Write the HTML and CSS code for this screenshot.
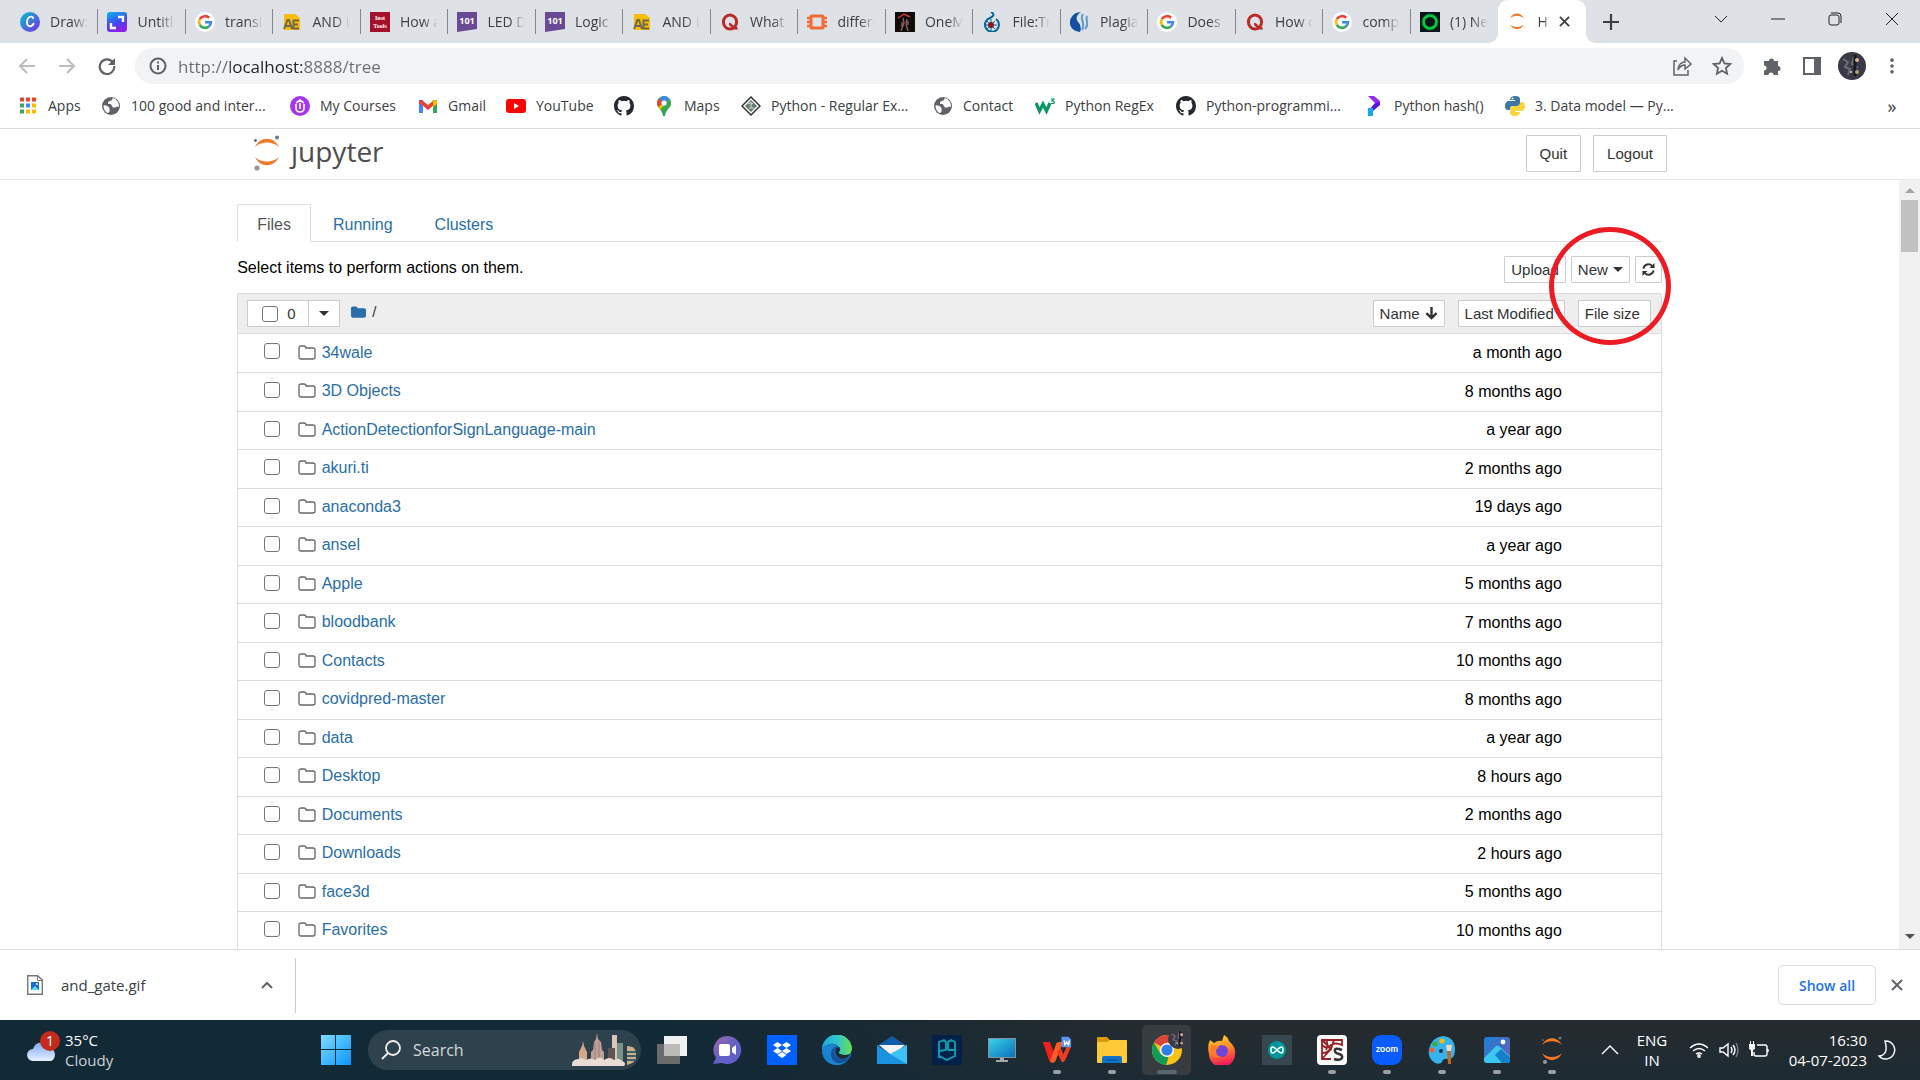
FILE: index.html
```html
<!DOCTYPE html>
<html lang="en">
	<head>
		<meta charset="utf-8">
		<title>Home Page - Select or create a notebook</title>
		<link rel="stylesheet" href="styles.css">
	</head>
	<body>
		<!-- shared icons -->
		<svg class="defs" aria-hidden="true">
			<symbol id="google" viewBox="0 0 20 20"><circle cx="10" cy="10" r="10" fill="#fff"/><path d="M14.2 5.8A6 6 0 0 0 4.8 7.2" fill="none" stroke="#ea4335" stroke-width="2.6"/><path d="M4.8 7.2A6 6 0 0 0 4.8 12.8" fill="none" stroke="#fbbc05" stroke-width="2.6"/><path d="M4.8 12.8A6 6 0 0 0 13.8 14.6" fill="none" stroke="#34a853" stroke-width="2.6"/><path d="M13.8 14.6A6 6 0 0 0 16 10.2H10" fill="none" stroke="#4285f4" stroke-width="2.6"/></symbol>
			<symbol id="quora" viewBox="0 0 20 20"><ellipse cx="10" cy="10" rx="6.6" ry="7" fill="none" stroke="#b92b27" stroke-width="3"/><path d="M9 12c3 0 4 6 8.500 4" fill="none" stroke="#b92b27" stroke-width="2.600"/></symbol>
			<symbol id="ae" viewBox="0 0 20 20"><path d="M2 2h11l5 4v12H2z" fill="#fbbc05"/><path d="M2 17l3.500-9h1.500l3 9M3.500 14h5M17 8.500h-5.500v8H17M11.500 12.500H16" fill="none" stroke="#6d6a50" stroke-width="2"/></symbol>
			<symbol id="github" viewBox="0 0 16 16"><path fill="#24292f" d="M8 0C3.580 0 0 3.580 0 8c0 3.540 2.290 6.530 5.470 7.590.4.070.55-.17.55-.38 0-.19-.01-.82-.01-1.490-2.010.37-2.530-.49-2.690-.94-.09-.23-.48-.94-.82-1.130-.28-.15-.68-.52-.01-.53.63-.01 1.080.58 1.230.82.72 1.210 1.870.87 2.330.66.070-.52.28-.87.51-1.070-1.780-.2-3.640-.89-3.640-3.950 0-.87.31-1.590.82-2.150-.08-.2-.36-1.020.08-2.120 0 0 .67-.21 2.200.82a7.500 7.500 0 0 1 4 0c1.530-1.040 2.200-.82 2.200-.82.44 1.100.16 1.920.08 2.120.51.56.82 1.270.82 2.150 0 3.070-1.870 3.750-3.650 3.950.29.25.54.73.54 1.480 0 1.070-.01 1.930-.01 2.200 0 .21.15.46.55.38A8 8 0 0 0 16 8c0-4.420-3.580-8-8-8z"/></symbol>
			<symbol id="globe" viewBox="0 0 20 20"><circle cx="10" cy="10" r="9" fill="#5f6368"/><path d="M2.500 9l4 1 2 2v4l-2 1q-4-2-4-8zM12 2q-1 3-3 3t-2 3q3-1 4 2t4 1q2-1 3 0 0-7-6-9z" fill="#fff"/></symbol>
			<symbol id="folder" viewBox="0 0 18 16"><path d="M1 3q0-2 2-2h3q2 0 2 2h7q2 0 2 2v7q0 2-2 2H3q-2 0-2-2z" fill="none" stroke="#666" stroke-width="1.300"/></symbol>
			<symbol id="chip101" viewBox="0 0 20 20"><path d="M0 0h20v17L0 20z" fill="#6a4a95"/><text x="10" y="12" text-anchor="middle" font-size="9" font-weight="700" font-family="Open Sans" fill="#fff">101</text></symbol>
			<symbol id="jupiter" viewBox="0 0 26 34"><path d="M1 11C6 0 20 0 25 11 19 5 7 5 1 11zM1 21c5 11 19 11 24 0-6 6-18 6-24 0z" fill="#f37726"/></symbol>
			<symbol id="avatar" viewBox="0 0 28 28"><circle cx="14" cy="14" r="14" fill="#393a45"/><path d="M5 7l5 3-3 5 5 2-2 6M16 4l-2 8 5 3-3 8" stroke="#6c6e7a" stroke-width="2" fill="none"/><path d="M17 3v21" stroke="#171820" stroke-width="3"/><circle cx="19" cy="8" r="2" fill="#d6b893"/><circle cx="19" cy="20" r="2" fill="#b99a76"/><circle cx="13" cy="20" r="1" fill="#ddd"/></symbol>
		</svg>

		<header class="browser">
			<div class="tabstrip">
				<nav class="tabs" aria-label="Browser tabs">
					<a class="tab" href="#"><svg viewBox="0 0 20 20"><defs><linearGradient id="canva" x2="1" y2="1"><stop stop-color="#00c4cc"/><stop offset="1" stop-color="#7d2ae8"/></linearGradient></defs><circle cx="10" cy="10" r="10" fill="url(#canva)"/><path d="M13 7c1-4-6-3-6 3 0 6 5 5 7 1" fill="none" stroke="#fff" stroke-width="1.800"/></svg><span>Draw:</span></a>
					<a class="tab" href="#"><svg viewBox="0 0 20 20"><defs><linearGradient id="unt" x2=".4" y2="1"><stop stop-color="#0cb5f0"/><stop offset=".6" stop-color="#3b4df0"/><stop offset="1" stop-color="#8b22e8"/></linearGradient></defs><rect width="20" height="20" rx="3" fill="url(#unt)"/><path d="M11 5h5v5M4 11v5h5" fill="none" stroke="#fff" stroke-width="2.400"/></svg><span>Untitled</span></a>
					<a class="tab" href="#"><svg><use href="#google"/></svg><span>transistor</span></a>
					<a class="tab" href="#"><svg><use href="#ae"/></svg><span>AND Logic</span></a>
					<a class="tab" href="#"><svg viewBox="0 0 20 20"><rect width="20" height="20" fill="#a4102c"/><text x="10" y="8" text-anchor="middle" font-size="6" font-weight="700" font-family="Liberation Serif" fill="#fff">Inst</text><text x="10" y="16" text-anchor="middle" font-size="6" font-weight="700" font-family="Liberation Serif" fill="#fff">Tools</text></svg><span>How a</span></a>
					<a class="tab" href="#"><svg><use href="#chip101"/></svg><span>LED Driver</span></a>
					<a class="tab" href="#"><svg><use href="#chip101"/></svg><span>Logic</span></a>
					<a class="tab" href="#"><svg><use href="#ae"/></svg><span>AND Logic</span></a>
					<a class="tab" href="#"><svg><use href="#quora"/></svg><span>What</span></a>
					<a class="tab" href="#"><svg viewBox="0 0 20 20"><path d="M0 6h20M0 10h20M0 14h20" stroke="#f26b35" stroke-width="2.400"/><rect x="4" y="4" width="12" height="12" rx="1" fill="#dee1e6" stroke="#f26b35" stroke-width="3"/></svg><span>difference</span></a>
					<a class="tab" href="#"><svg viewBox="0 0 20 20"><rect width="20" height="20" fill="#120b0b"/><path d="M3 6l6-4 6 3" fill="none" stroke="#d0402a" stroke-width="1.500"/><path d="M8 6l1 5-3 8M12 7l-1 5 2 7M7 10v5M13 9v4" fill="none" stroke="#8d6460" stroke-width="1.300"/></svg><span>OneMo</span></a>
					<a class="tab" href="#"><svg viewBox="0 0 20 20"><path d="M9 0c5 3 1 5-1 6a7 7 0 1 0 6 1" fill="none" stroke="#069" stroke-width="2"/><circle cx="9" cy="13" r="3" fill="#900"/><path d="M9 7v12M3 13h12M5 9l8 8M13 9l-8 8" stroke="#069" stroke-width="1"/><circle cx="9" cy="13" r="2" fill="#b00"/></svg><span>File:Trans</span></a>
					<a class="tab" href="#"><svg viewBox="0 0 20 20"><path d="M11 0C5 4 6 8 9 11q3 4 1 9C1 19-2 12 1 6q3-6 10-6z" fill="#134fa2"/><path d="M13 2c-4 5 3 8-1 16M17 4c-2 4 3 8-2 13" fill="none" stroke="#5b9bd5" stroke-width="2"/></svg><span>Plagiarism</span></a>
					<a class="tab" href="#"><svg><use href="#google"/></svg><span>Does</span></a>
					<a class="tab" href="#"><svg><use href="#quora"/></svg><span>How do</span></a>
					<a class="tab" href="#"><svg><use href="#google"/></svg><span>compare</span></a>
					<a class="tab last" href="#"><svg viewBox="0 0 20 20"><rect width="20" height="20" fill="#08131a"/><circle cx="10" cy="10" r="6.500" fill="none" stroke="#0ac63b" stroke-width="3"/><circle cx="10" cy="10" r="8" fill="none" stroke="#067a35" stroke-width="1"/></svg><span>(1) New</span></a>
					<a class="tab active" href="#"><svg viewBox="0 0 26 32"><use href="#jupiter" width="26" height="32"/></svg><span>Home</span><svg class="x" viewBox="0 0 12 12"><path d="M1 1l10 10M11 1L1 11" stroke="#3c4043" stroke-width="2"/></svg></a>
				</nav>
				<button class="newtab" aria-label="New tab"><svg viewBox="0 0 16 16"><path d="M8 0v16M0 8h16" stroke="#3c4043" stroke-width="2.200"/></svg></button>
				<div class="window-buttons">
					<button aria-label="Search tabs"><svg viewBox="0 0 14 14"><path d="M1 4l6 6 6-6"/></svg></button>
					<button aria-label="Minimize"><svg viewBox="0 0 14 14"><path d="M0 7h14"/></svg></button>
					<button aria-label="Restore"><svg viewBox="0 0 14 14"><rect x="1" y="3" width="10" height="10" rx="2"/><path d="M3 1h7q3 0 3 3v7"/></svg></button>
					<button aria-label="Close"><svg viewBox="0 0 14 14"><path d="M1 1l12 12M13 1L1 13"/></svg></button>
				</div>
			</div>

			<div class="toolbar">
				<button aria-label="Back"><svg class="dim" viewBox="0 0 18 18"><path d="M17 9H2M9 2L2 9l7 7"/></svg></button>
				<button aria-label="Forward"><svg class="dim" viewBox="0 0 18 18"><path d="M1 9h15M9 2l7 7-7 7"/></svg></button>
				<button aria-label="Reload"><svg viewBox="0 0 18 18"><path d="M15 5.500A7.300 7.300 0 1 0 16.300 9" stroke-width="2.200"/><path d="M17 1v7h-7z" fill="#5f6368" stroke="none"/></svg></button>
				<div class="omnibox">
					<svg viewBox="0 0 18 18"><circle cx="9" cy="9" r="7.500"/><path d="M9 8v5M9 4.500v2"/></svg>
					<input class="url" type="text" value="http://localhost:8888/tree" aria-label="Address">
					<button aria-label="Share"><svg viewBox="0 0 20 20"><path d="M5 5H2v14h14v-5M6 14c0-6 4-8 7-8V2l6 6-6 5V9c-3 0-5 1-7 5z" stroke-width="1.500"/></svg></button>
					<button aria-label="Bookmark this page"><svg viewBox="0 0 20 20"><path d="M10 2l2.400 5.400 5.900.6-4.400 4 1.200 5.800-5.100-3-5.100 3L6.100 12 1.700 8l5.900-.6z" stroke-width="1.800"/></svg></button>
				</div>
				<button aria-label="Extensions"><svg class="puzzle" viewBox="0 0 20 20"><path d="M2 5h5a2.500 2.500 0 1 1 5 0h4v5a2.500 2.500 0 1 1 0 5v4h-4.500a2.500 2.500 0 1 0-5 0H2v-4.500a2.500 2.500 0 1 0 0-5z" fill="#5f6368" stroke="none"/></svg></button>
				<button aria-label="Side panel"><svg viewBox="0 0 18 18"><path d="M1 1h16v16H1z"/><path d="M11 1h6v16h-6z" fill="#5f6368" stroke="none"/></svg></button>
				<button aria-label="Profile"><svg class="avatar"><use href="#avatar"/></svg></button>
				<button aria-label="Menu"><svg viewBox="0 0 20 20"><g fill="#5f6368" stroke="none"><circle cx="10" cy="3.500" r="2"/><circle cx="10" cy="10" r="2"/><circle cx="10" cy="16.500" r="2"/></g></svg></button>
			</div>

			<nav class="bookmarks" aria-label="Bookmarks">
				<a href="#"><svg viewBox="0 0 20 20"><path d="M2 3.500h4m2 0h4m2 0h4" stroke="#ea4335" stroke-width="4"/><path d="M2 9.500h4" stroke="#34a853" stroke-width="4"/><path d="M8 9.500h4" stroke="#4285f4" stroke-width="4"/><path d="M14 9.500h4M8 15.500h4m2 0h4" stroke="#fbbc05" stroke-width="4"/><path d="M2 15.500h4" stroke="#34a853" stroke-width="4"/></svg>Apps</a>
				<a href="#"><svg><use href="#globe"/></svg>100 good and inter...</a>
				<a href="#"><svg viewBox="0 0 20 20"><circle cx="10" cy="10" r="10" fill="#a435f0"/><path d="M6 8v4q0 4 4 4t4-4V8M6 7l4-3 4 3M10 7v6" fill="none" stroke="#fff" stroke-width="1.600"/></svg>My Courses</a>
				<a href="#"><svg viewBox="0 0 20 20"><path d="M1 4h4v13H1z" fill="#4285f4"/><path d="M15 4h4v13h-4z" fill="#34a853"/><path d="M1 5l3-1 6 5 6-5v5l-6 5-6-5-3-2z" fill="#ea4335"/><path d="M15 5q4-3 4 1v2l-4 3z" fill="#fbbc05"/></svg>Gmail</a>
				<a href="#"><svg viewBox="0 0 20 20"><rect y="3" width="20" height="14" rx="3" fill="#f00"/><path d="M8 7l5 3-5 3z" fill="#fff"/></svg>YouTube</a>
				<a href="#" aria-label="GitHub"><svg><use href="#github"/></svg></a>
				<a href="#"><svg viewBox="0 0 20 20"><path d="M10 0a7 7 0 0 1 7 7c0 5-5 6-6 13h-2C8 13 3 12 3 7a7 7 0 0 1 7-7z" fill="#34a853"/><path d="M8 .500l5 0 3 3-6 7z" fill="#4285f4"/><path d="M5 2.500L10 7l-6 4Q2 6 5 2.500z" fill="#ea4335"/><path d="M10 7l-6 4 2 3 9-10z" fill="#fbbc05"/><path d="M15 2.500q4 5 0 9L9 15l-2-1z" fill="#34a853"/><path d="M6 2q5-4 9 1l-5 4z" fill="#4285f4"/><circle cx="10" cy="7" r="2.600" fill="#fff"/></svg>Maps</a>
				<a href="#"><svg viewBox="0 0 20 20"><path d="M10 1l9 9-9 9-9-9z" fill="#fff" stroke="#333" stroke-width="1.500"/><path d="M10 4l6 6-6 6-6-6z" fill="#657b6e"/><path d="M7 8q3-3 5 0M8 12h5M10 7v4" stroke="#dceadf" fill="none"/></svg>Python - Regular Ex...</a>
				<a href="#"><svg><use href="#globe"/></svg>Contact</a>
				<a href="#"><svg viewBox="0 0 20 20"><path d="M1 7l3.500 8L8 8l3.500 7L15 7" fill="none" stroke="#059862" stroke-width="3.200"/><path d="M16 3h3l-2 2q3 0 2 2.500h-3" fill="none" stroke="#059862" stroke-width="1.200"/></svg>Python RegEx</a>
				<a href="#"><svg><use href="#github"/></svg>Python-programmi...</a>
				<a href="#"><svg viewBox="0 0 20 20"><path d="M4 0h6l6 5v3l-4 4-1-5z" fill="#9a2cf0"/><path d="M16 6v3l-7 6H4l7-8z" fill="#5b14e6"/><path d="M4 12h5v8H4z" fill="#15a8f4"/></svg>Python hash()</a>
				<a href="#"><svg viewBox="0 0 20 20"><path d="M10 0q5 0 5 3v4q0 3-3 3H8q-3 0-3 4H3q-3 0-3-4t3-5h7V4H5q0-4 5-4z" fill="#3c77a9"/><path d="M10 20q-5 0-5-3v-4q0-3 3-3h4q3 0 3-4h2q3 0 3 4t-3 5h-7v1h5q0 4-5 4z" fill="#fdd43b"/><circle cx="7.500" cy="2.500" r="1" fill="#fff"/></svg>3. Data model — Py...</a>
				<button class="more" aria-label="More bookmarks">»</button>
			</nav>
		</header>

		<main class="notebook">
			<header class="site-header">
				<div class="container">
					<a class="logo" href="#"><svg viewBox="0 0 26 36"><use href="#jupiter" y="1" width="26" height="34"/><circle cx="23" cy="2.500" r="2" fill="#767677"/><circle cx="1.500" cy="5.500" r="1.400" fill="#616262"/><circle cx="3" cy="33" r="2.600" fill="#989798"/></svg><span>ȷupyter</span></a>
					<button class="btn big">Quit</button>
					<button class="btn big">Logout</button>
				</div>
			</header>

			<div class="site">
				<div class="page">
					<nav class="nav-tabs">
						<a class="active" href="#">Files</a>
						<a href="#">Running</a>
						<a href="#">Clusters</a>
					</nav>
					<div class="list-toolbar">
						<p>Select items to perform actions on them.</p>
						<button class="btn">Upload</button>
						<button class="btn">New <i class="caret"></i></button>
						<button class="btn refresh" aria-label="Refresh"><svg viewBox="0 0 14 14"><path d="M1.500 6A5.500 5.500 0 0 1 11 3.200M12.500 8A5.500 5.500 0 0 1 3 10.800" fill="none" stroke="#333" stroke-width="2"/><path d="M13.500 0v5.500H8zM.5 14V8.500H6z" fill="#333"/></svg></button>
					</div>

					<div class="list-header">
						<div class="selector">
							<label><input type="checkbox">0</label>
							<button aria-label="Select"><i class="caret"></i></button>
						</div>
						<a class="crumb" href="#" aria-label="Home folder"><svg viewBox="0 0 16 14"><path d="M0 3q0-2 2-2h3q2 0 2 2h7q2 0 2 2v6q0 2-2 2H2q-2 0-2-2z" fill="#296eaa"/></svg></a>
						<span class="slash">/</span>
						<button class="btn sort-name">Name <svg viewBox="0 0 14 14"><path d="M7 0v11M1.500 6.500L7 12l5.500-5.500" fill="none" stroke="#333" stroke-width="2.600"/></svg></button>
						<button class="btn sort-date">Last Modified</button>
						<button class="btn sort-size">File size</button>
					</div>

					<table class="files">
						<tr><td><input type="checkbox" aria-label="34wale"></td><td><svg><use href="#folder"/></svg><a href="#">34wale</a></td><td>a month ago</td></tr>
						<tr><td><input type="checkbox" aria-label="3D Objects"></td><td><svg><use href="#folder"/></svg><a href="#">3D Objects</a></td><td>8 months ago</td></tr>
						<tr><td><input type="checkbox" aria-label="ActionDetectionforSignLanguage-main"></td><td><svg><use href="#folder"/></svg><a href="#">ActionDetectionforSignLanguage-main</a></td><td>a year ago</td></tr>
						<tr><td><input type="checkbox" aria-label="akuri.ti"></td><td><svg><use href="#folder"/></svg><a href="#">akuri.ti</a></td><td>2 months ago</td></tr>
						<tr><td><input type="checkbox" aria-label="anaconda3"></td><td><svg><use href="#folder"/></svg><a href="#">anaconda3</a></td><td>19 days ago</td></tr>
						<tr><td><input type="checkbox" aria-label="ansel"></td><td><svg><use href="#folder"/></svg><a href="#">ansel</a></td><td>a year ago</td></tr>
						<tr><td><input type="checkbox" aria-label="Apple"></td><td><svg><use href="#folder"/></svg><a href="#">Apple</a></td><td>5 months ago</td></tr>
						<tr><td><input type="checkbox" aria-label="bloodbank"></td><td><svg><use href="#folder"/></svg><a href="#">bloodbank</a></td><td>7 months ago</td></tr>
						<tr><td><input type="checkbox" aria-label="Contacts"></td><td><svg><use href="#folder"/></svg><a href="#">Contacts</a></td><td>10 months ago</td></tr>
						<tr><td><input type="checkbox" aria-label="covidpred-master"></td><td><svg><use href="#folder"/></svg><a href="#">covidpred-master</a></td><td>8 months ago</td></tr>
						<tr><td><input type="checkbox" aria-label="data"></td><td><svg><use href="#folder"/></svg><a href="#">data</a></td><td>a year ago</td></tr>
						<tr><td><input type="checkbox" aria-label="Desktop"></td><td><svg><use href="#folder"/></svg><a href="#">Desktop</a></td><td>8 hours ago</td></tr>
						<tr><td><input type="checkbox" aria-label="Documents"></td><td><svg><use href="#folder"/></svg><a href="#">Documents</a></td><td>2 months ago</td></tr>
						<tr><td><input type="checkbox" aria-label="Downloads"></td><td><svg><use href="#folder"/></svg><a href="#">Downloads</a></td><td>2 hours ago</td></tr>
						<tr><td><input type="checkbox" aria-label="face3d"></td><td><svg><use href="#folder"/></svg><a href="#">face3d</a></td><td>5 months ago</td></tr>
						<tr><td><input type="checkbox" aria-label="Favorites"></td><td><svg><use href="#folder"/></svg><a href="#">Favorites</a></td><td>10 months ago</td></tr>
					</table>
					<div class="marker"></div>
				</div>
				<div class="scrollbar"><i class="up"></i><div class="thumb"></div><i class="down"></i></div>
			</div>
		</main>

		<section class="downloads">
			<div class="item">
				<svg class="doc" viewBox="0 0 16 20"><path d="M.7.700h10L15.300 5v14.300H.7z" fill="#fff" stroke="#777" stroke-width="1.400"/><path d="M10.500 1v4.500H15" fill="none" stroke="#777"/><rect x="4" y="7" width="8" height="8" fill="#1d6ed0"/><path d="M4 15l4-4 4 4z" fill="#5ce0f5"/><circle cx="10" cy="9" r="1" fill="#fff"/></svg>
				<span>and_gate.gif</span>
				<button aria-label="Options"><svg viewBox="0 0 12 12"><path d="M1 9l5-5 5 5" fill="none" stroke="#5f6368" stroke-width="2"/></svg></button>
			</div>
			<button class="show-all">Show all</button>
			<button class="close" aria-label="Close"><svg viewBox="0 0 12 12"><path d="M1 1l10 10M11 1L1 11" stroke="#5f6368" stroke-width="2"/></svg></button>
		</section>

		<footer class="taskbar">
			<a class="weather" href="#">
				<svg viewBox="0 0 34 34"><defs><linearGradient id="cl" y2="1" x2="0"><stop stop-color="#7fa8f5"/><stop offset="1" stop-color="#e8f0ff"/></linearGradient></defs><path d="M7 31a6 6 0 0 1 0-12 9 9 0 0 1 17-1 7 7 0 0 1 1 13z" fill="url(#cl)"/><circle cx="24" cy="11" r="10" fill="#c42b1c"/><text x="24" y="16" text-anchor="middle" font-size="14" font-family="Open Sans" fill="#fff">1</text></svg>
				<span>35°C<br><em>Cloudy</em></span>
			</a>
			<button class="start" aria-label="Start"><svg viewBox="0 0 30 30"><defs><linearGradient id="win" x2="1" y2="1"><stop stop-color="#80dcff"/><stop offset="1" stop-color="#0a96ff"/></linearGradient></defs><path d="M0 0h14v14H0zM15 0h15v14H15zM0 15h14v15H0zM15 15h15v15H15z" fill="url(#win)"/></svg></button>
			<label class="search">
				<svg viewBox="0 0 20 20"><circle cx="12" cy="8" r="7" fill="none" stroke="#eee" stroke-width="1.800"/><path d="M7 13l-6 6" stroke="#eee" stroke-width="2"/></svg>
				<input type="text" placeholder="Search" aria-label="Search">
				<svg class="city" viewBox="0 0 66 34"><path d="M12 8l1 5 3 6v12H8V19l3-6z" fill="#d3a98a"/><path d="M26 0l1 6 3 3 1 8 2 2v13H20V19l2-2 1-8 2-3z" fill="#c0a199"/><path d="M24 9v22M28 9v22" stroke="#9b7f7b"/><path d="M41 2h5v30h-5z" fill="#dcc5b8"/><path d="M46 10h6v20h-6z" fill="#789488"/><path d="M37 15h7v17h-7z" fill="#5d5655"/><path d="M56 13q8 0 9 6v6q-1 5-9 7z" fill="#cfb084"/><path d="M56 19h9M56 23h9M56 27h8" stroke="#35606e" stroke-width="2"/><path d="M1 33q-1-6 6-7 5-2 8 1 5-3 9 0 5-5 9 0 6-4 10 0 5-3 8 1 5 2 2 5z" fill="#e9dcd5"/></svg>
			</label>

			<nav class="apps" aria-label="Taskbar apps">
				<a href="#" aria-label="Task view"><svg viewBox="0 0 30 30"><rect x="7" y="1" width="23" height="20" fill="#f0f0f0"/><rect y="9" width="23" height="20" rx="1" fill="#6b6b6b"/><path d="M7 9h16v12H7z" fill="#bbb"/></svg></a>
				<a href="#" aria-label="Chat"><svg viewBox="0 0 30 30"><defs><linearGradient id="chat" x2="1" y2="1"><stop stop-color="#a266a5"/><stop offset=".5" stop-color="#6461c8"/><stop offset="1" stop-color="#5e5ec8"/></linearGradient></defs><path d="M15 1a14 14 0 1 1-5 27l-9 1 3-6A14 14 0 0 1 15 1z" fill="url(#chat)"/><rect x="7" y="9" width="11" height="12" rx="2" fill="#fff"/><path d="M20 13l4-3v10l-4-3z" fill="#fff"/></svg></a>
				<a href="#" aria-label="Dropbox"><svg viewBox="0 0 30 30"><path d="M0 0h30v30H0z" fill="#0061ff"/><path d="M10.500 7l4.500 3-4.500 3L6 10zM19.500 7l4.500 3-4.500 3-4.500-3zM10.500 13l4.500 3-4.500 3L6 16zM19.500 13l4.500 3-4.500 3-4.500-3zM15 17l4.500 3-4.500 3-4.500-3z" fill="#fff"/></svg></a>
				<a href="#" aria-label="Edge"><svg viewBox="0 0 30 30"><defs><linearGradient id="edge" x2="1"><stop stop-color="#20a7df"/><stop offset=".5" stop-color="#2fc4cf"/><stop offset="1" stop-color="#6be04d"/></linearGradient></defs><circle cx="15" cy="15" r="15" fill="#1264ad"/><path d="M0 15a15 15 0 0 1 30-1q0 6-7 6-7 0-6-3 2-2 1-4C14 6 3 8 0 15z" fill="url(#edge)"/><path d="M0 14c3-6 12-6 15-3-6 2-5 10 0 13 5 2 9 0 12-1q-5 8-14 7Q0 28 0 14z" fill="#1b82ce"/><path d="M14 12c-7 6 1 15 13 11-4 6-17 9-18-4q0-6 5-7z" fill="#14529a"/><path d="M14 13q-2 5 2 9 3 3 8 1 3-1 6-8v3q-3 2-7 2-8-1-6-3 2-3 0-5z" fill="#1f2c33"/></svg></a>
				<a href="#" aria-label="Mail"><svg viewBox="0 0 30 30"><path d="M0 11L15 1l15 10z" fill="#0f5da8"/><path d="M2 10h26L15 21z" fill="#f3f3f3"/><path d="M0 10l15 10L30 10v19H0z" fill="#1c93df"/><path d="M30 10v19L13 19z" fill="#3ec2f6"/></svg></a>
				<a href="#" aria-label="Portal"><svg viewBox="0 0 30 30"><path d="M0 0h30v30H0z" fill="#01204a"/><path d="M7 23V7l5-2 2 2v8l-7 1M16 15V7l3-2 4 2v14l-8 4-8-4M16 15h7" fill="none" stroke="#0aa5b5" stroke-width="1.800"/></svg></a>
				<a href="#" aria-label="This PC"><svg viewBox="0 0 30 30"><defs><linearGradient id="pc" x2="1" y2="1"><stop stop-color="#36d3e8"/><stop offset="1" stop-color="#0e6dbb"/></linearGradient></defs><path d="M1 3h28v20H1z" fill="#84929b"/><path d="M2 4h26v18H2z" fill="url(#pc)"/><path d="M13 23h4v2h4v2H9v-2h4z" fill="#a2a7aa"/></svg></a>
				<a class="open" href="#" aria-label="WPS Office"><svg viewBox="0 0 34 32"><path d="M1 7h8l5 13-3 9q-2 1-3-1z" fill="#ef201c"/><path d="M9 29l7-20q1-2 3-2h5l-9 22q-3 3-6 0z" fill="#ff5a24"/><path d="M17 18l5 11q2 2 4-1l7-16h-5l-4 9-3-8z" fill="#f23c1f"/><path d="M22 1h8l3 3v9H22z" fill="#5f91ee"/><path d="M25 5l1 5 2-3 2 3 1-5" stroke="#fff" fill="none" stroke-width="1.500"/></svg></a>
				<a class="open" href="#" aria-label="File Explorer"><svg viewBox="0 0 30 30"><path d="M0 3q0-1 1-1h9l3 3h16q1 0 1 2H0z" fill="#dc9a08"/><path d="M0 7h10l3-2h16q1 0 1 1v21q0 1-1 1H1q-1 0-1-1z" fill="#ffc938"/><path d="M5 28v-5q0-2 2-2h16q2 0 2 2v5z" fill="#0e75ca"/><path d="M9 25h12" stroke="#07488a"/></svg></a>
				<a class="open current" href="#" aria-label="Chrome"><svg viewBox="0 0 38 36"><circle cx="16" cy="21" r="15" fill="#fbc116"/><path d="M3 13.500a15 15 0 0 1 26 0H16v7z" fill="#db4437"/><path d="M3 13.500L9.500 25l8 3.500L15 36A15 15 0 0 1 3 13.500z" fill="#0f9d58"/><circle cx="16" cy="21" r="7" fill="#fff"/><circle cx="16" cy="21" r="5.600" fill="#2f7de9"/><use href="#avatar" x="17" y="0" width="20" height="20"/></svg></a>
				<a href="#" aria-label="Firefox"><svg viewBox="0 0 30 30"><defs><linearGradient id="fox" x2=".2" y2="1"><stop stop-color="#ffd83a"/><stop offset=".5" stop-color="#ff8b25"/><stop offset="1" stop-color="#f2185b"/></linearGradient></defs><path d="M3 5l4 3q4-3 8-2l2-6q4 2 5 6l3 3q4 5 3 10A13 13 0 0 1 2 19Q0 11 3 5z" fill="url(#fox)"/><circle cx="15" cy="16" r="6" fill="#7045d8"/><path d="M4 10q6 0 8 2l-5 5q2 5 8 5-9 3-12-5z" fill="#ff7a26"/></svg></a>
				<a href="#" aria-label="Arduino"><svg viewBox="0 0 30 30"><path d="M0 0h30v30H0z" fill="#37474f"/><circle cx="15" cy="15" r="9" fill="#00979c"/><path d="M15 15q-6-6-6 0t6 0q6-6 6 0t-6 0z" fill="none" stroke="#fff" stroke-width="1.500"/></svg></a>
				<a class="open" href="#" aria-label="Spyder"><svg viewBox="0 0 30 30"><rect width="30" height="30" rx="4" fill="#fafafa"/><path d="M4 5h21v6M5 5v19h9M5 10q5 5 9 0 4-3 11 0M5 18q6 0 8-4M5 5l9 9 3-9M14 14L5 24M9 5q3 5 0 10" fill="none" stroke="#9c1f24" stroke-width="1.800"/><path d="M25 15q-8-3-7 1 0 2 4 3t3 4q-2 3-8 1" fill="none" stroke="#333" stroke-width="2.500"/></svg></a>
				<a class="open" href="#" aria-label="Zoom"><svg viewBox="0 0 30 30"><rect width="30" height="30" rx="9" fill="#0b5cff"/><text x="15" y="17" text-anchor="middle" font-size="9" font-weight="700" font-family="Lato" fill="#fff">zoom</text></svg></a>
				<a class="open" href="#" aria-label="Paint"><svg viewBox="0 0 30 30"><path d="M16 1q12 1 12 14 0 9-7 9-5-1-6 3-2 3-7 1-8-5-6-14Q5 2 16 1z" fill="#35b3ea"/><circle cx="15" cy="6" r="2.600" fill="#f7b718"/><circle cx="8" cy="9" r="2.600" fill="#3ba946"/><circle cx="5" cy="15" r="2.600" fill="#e8623b"/><circle cx="14" cy="16" r="2" fill="#134"/><path d="M19 10h6l-1 6h-4z" fill="#eadbc2"/><path d="M20 16h4v13h-3z" fill="#b9692c"/></svg></a>
				<a class="open" href="#" aria-label="Photos"><svg viewBox="0 0 30 30"><defs><linearGradient id="ph" x2="1" y2="1"><stop stop-color="#1682d6"/><stop offset="1" stop-color="#7357b5"/></linearGradient></defs><rect x="2" y="2" width="26" height="26" rx="3" fill="url(#ph)"/><path d="M2 23l12-12q2-1 4 1l10 9v4q0 3-3 3H5q-3 0-3-3z" fill="#3cc7f0"/><path d="M13 20l6-6 9 8v3q0 3-3 3h-5z" fill="#157fcb"/><circle cx="21" cy="7" r="2.400" fill="#fff"/></svg></a>
				<a class="open" href="#" aria-label="Jupyter"><svg viewBox="0 0 30 30"><use href="#jupiter" x="4" y="1" width="22" height="28"/><circle cx="23" cy="3" r="1.500" fill="#767677"/><circle cx="6" cy="5" r="1" fill="#616262"/><circle cx="8" cy="27" r="2" fill="#989798"/></svg></a>
			</nav>

			<div class="tray">
				<button aria-label="Show hidden icons"><svg viewBox="0 0 20 20"><path d="M2 14l8-8 8 8"/></svg></button>
				<button class="lang">ENG<br>IN</button>
				<button class="status" aria-label="Network, volume and battery">
					<svg viewBox="0 0 20 20"><path d="M1 8q9-8 18 0M4 11q6-5 12 0M7 14q3-2 6 0"/><circle cx="10" cy="16" r="1.200"/></svg>
					<svg viewBox="0 0 20 20"><path d="M1 8h3l5-4v12l-5-4H1zM12 7q2 3 0 6M14 5q4 5 0 10"/><path d="M17 3q4 7 0 14" opacity=".4"/></svg>
					<svg viewBox="0 0 20 20"><path d="M8 5h8q2 0 2 2v7q0 2-2 2H7q-2 0-2-2v-2M19 9v3"/><path d="M0 4h6v4q0 2-3 2T0 8zM1 1h1v3H1zM4 1h1v3H4zM2 9h2v7H2z" fill="#fff" stroke="none"/></svg>
				</button>
				<button class="clock">16:30<br>04-07-2023</button>
				<button aria-label="Notifications"><svg viewBox="0 0 20 20"><path d="M8 1a9 9 0 1 1-6 15q10-1 6-15z"/></svg></button>
			</div>
		</footer>
	</body>
</html>
```
FILE: styles.css
```css
* {
	box-sizing: border-box;
}
html, body {
	height: 100%;
}
body {
	margin: 0;
	display: flex;
	flex-direction: column;
	overflow: hidden;
	background: #fff;
	font-family: "Segoe UI", "Open Sans", sans-serif;
	font-size: 14px;
	color: #3c4043;
}
a {
	color: inherit;
	text-decoration: none;
}
button {
	padding: 0;
	border: 0;
	background: none;
	font: inherit;
	color: inherit;
}
svg {
	display: block;
	flex: none;
	width: 20px;
	height: 20px;
}
.defs {
	position: absolute;
	width: 0;
	height: 0;
}

/* browser chrome */
.browser {
	flex: none;
	border-bottom: 1px solid #dadce0;
}
.tabstrip {
	display: flex;
	align-items: center;
	height: 43px;
	padding-left: 11px;
	background: #dee1e6;
}
.tabs {
	display: grid;
	grid-template-columns: repeat(18, 1fr);
	flex: none;
	width: 82.5%;
	height: 43px;
}
.tab {
	display: flex;
	align-items: center;
	gap: 10px;
	min-width: 0;
	padding-left: 9px;
	background: linear-gradient(#85888c, #85888c) right center / 1px 25px no-repeat;
}
.tab span {
	width: 38px;
	overflow: hidden;
	white-space: nowrap;
	-webkit-mask-image: linear-gradient(90deg, #000 60%, transparent);
	mask-image: linear-gradient(90deg, #000 60%, transparent);
}
.tab.last {
	background: none;
}
.tab.active {
	position: relative;
	background: #fff;
	border-radius: 10px 10px 0 0;
}
.tab.active::before, .tab.active::after {
	content: "";
	position: absolute;
	bottom: 0;
	left: -10px;
	width: 10px;
	height: 10px;
	background: radial-gradient(circle at 0 0, transparent 10px, #fff 10px);
}
.tab.active::after {
	left: 100%;
	background: radial-gradient(circle at 100% 0, transparent 10px, #fff 10px);
}
.tab.active span {
	width: 12px;
}
.tab .x {
	width: 11px;
	height: 11px;
}
.newtab {
	display: grid;
	place-items: center;
	width: 50px;
}
.newtab svg {
	width: 16px;
	height: 16px;
}
.window-buttons {
	display: flex;
	margin-left: auto;
	margin-bottom: 6px;
}
.window-buttons button {
	display: grid;
	place-items: center;
	width: 57px;
	height: 36px;
}
.window-buttons svg {
	width: 14px;
	height: 14px;
	fill: none;
	stroke: #222;
}
.toolbar {
	display: flex;
	align-items: center;
	height: 46px;
	padding: 0 8px 0 7px;
}
.toolbar button {
	display: grid;
	place-items: center;
	width: 40px;
	height: 36px;
}
.toolbar svg {
	width: 18px;
	height: 18px;
	fill: none;
	stroke: #5f6368;
	stroke-width: 2;
}
.toolbar svg.dim {
	stroke: #babcbe;
}
.toolbar svg.puzzle {
	width: 20px;
	height: 20px;
}
.toolbar svg.avatar {
	width: 28px;
	height: 28px;
	stroke: none;
}
.omnibox {
	display: flex;
	align-items: center;
	flex: 1;
	height: 36px;
	margin: 0 8px;
	padding: 0 2px 0 14px;
	border-radius: 18px;
	background: #f1f3f4;
}
.omnibox button svg {
	width: 20px;
	height: 20px;
}
/* the host part of the address is darker than the rest */
.url {
	flex: 1;
	min-width: 0;
	margin-left: 11px;
	padding: 0;
	border: 0;
	font: inherit;
	font-size: 17px;
	color: transparent;
	background: linear-gradient(90deg, #6a6e72 52px, #202124 52px, #202124 124px, #6a6e72 124px);
	-webkit-background-clip: text;
	background-clip: text;
}
.bookmarks {
	display: grid;
	grid-template-columns: 83px 189px 128px 88px 108px 40px 87px 192px 102px 141px 188px 141px 1fr 24px;
	align-items: center;
	height: 39px;
	padding: 0 16px 6px 18px;
}
.bookmarks a {
	display: flex;
	align-items: center;
	gap: 10px;
	white-space: nowrap;
}
.more {
	font-size: 18px;
}

/* jupyter page */
.notebook {
	display: flex;
	flex-direction: column;
	flex: 1;
	min-height: 0;
	font-family: "Helvetica Neue", Arial, "Liberation Sans", sans-serif;
	font-size: 16px;
	color: #000;
}
.site-header {
	flex: none;
	border-bottom: 1px solid #e7e7e7;
}
.container {
	display: flex;
	align-items: center;
	gap: 12px;
	width: 75%;
	height: 50px;
	margin: 0 auto;
	padding: 0 13px 2px 14px;
}
.logo {
	display: flex;
	align-items: center;
	gap: 11px;
	margin-right: auto;
	font-family: "Open Sans", sans-serif;
	font-size: 28px;
	line-height: 36px;
	color: #4e4e4e;
}
.logo svg {
	width: 26px;
	height: 36px;
}
.logo span {
	padding-bottom: 4px;
}
.btn {
	display: flex;
	align-items: center;
	height: 27px;
	padding: 0 6px;
	border: 1px solid #ccc;
	border-radius: 1px;
	background: #fff;
	font-size: 15px;
	color: #333;
}
.btn.big {
	height: 37px;
	padding: 0 13px;
}
.site {
	display: flex;
	flex: 1;
	min-height: 0;
	overflow: hidden;
}
.page {
	position: relative;
	flex: none;
	width: 74.2%;
	margin: 0 auto;
	padding-top: 24px;
}
.nav-tabs {
	display: flex;
	gap: 2px;
	border-bottom: 1px solid #ddd;
}
.nav-tabs a {
	margin-bottom: -1px;
	padding: 4px 19px 0;
	border: 1px solid transparent;
	border-radius: 2px 2px 0 0;
	line-height: 32px;
	color: #296eaa;
}
.nav-tabs .active {
	border-color: #ddd;
	border-bottom-color: #fff;
	background: #fff;
	color: #555;
}
.list-toolbar {
	display: flex;
	align-items: center;
	gap: 5px;
	height: 51px;
}
.list-toolbar p {
	margin: 0 auto 0 0;
}
.list-toolbar .btn {
	margin-top: 4px;
}
.btn svg {
	width: 13px;
	height: 13px;
}
.caret {
	display: inline-block;
	margin-left: 5px;
	border: 5px solid transparent;
	border-top-color: #333;
	border-bottom: 0;
}
.list-header {
	display: flex;
	align-items: center;
	height: 41px;
	padding: 0 10px 0 9px;
	border: 1px solid #ddd;
	border-radius: 2px 2px 0 0;
	background: #eee;
}
.selector {
	display: flex;
	height: 27px;
	border: 1px solid #ccc;
	background: #fff;
	font-size: 15px;
	color: #333;
}
.selector label {
	display: flex;
	align-items: center;
	width: 60px;
	padding-left: 14px;
}
.selector input {
	margin: 0 9px 0 0;
}
.selector button {
	width: 31px;
	border-left: 1px solid #ccc;
}
.selector .caret {
	margin: 0 0 3px;
}
.notebook input {
	width: 16px;
	height: 16px;
	appearance: none;
	border: 1px solid #767676;
	border-radius: 3px;
	background: #fff;
}
.crumb {
	margin: 0 6px 4px 11px;
}
.crumb svg {
	width: 15px;
	height: 14px;
}
.slash {
	margin: 0 auto 4px 0;
	font-size: 15px;
	color: #333;
}
.sort-name {
	gap: 5px;
}
.sort-date, .sort-size {
	margin-left: 13px;
	padding-right: 10px;
}
.files {
	width: 100%;
	border-collapse: collapse;
	border: 1px solid #ddd;
	border-top: 0;
}
.files tr {
	height: 38px;
	border-bottom: 1px solid #ddd;
}
.files tr:nth-child(even) {
	height: 39px;
}
.files td {
	padding: 0;
}
.files td:first-child {
	width: 60px;
	padding-left: 26px;
}
.files td:first-child input {
	display: block;
	margin: 0 0 3px;
}
.files td:nth-child(2) {
	display: flex;
	align-items: center;
	gap: 6px;
	height: 37px;
}
.files td:last-child {
	padding-right: 99px;
	text-align: right;
}
.files svg {
	width: 18px;
	height: 16px;
}
.files a {
	color: #296eaa;
}
.marker {
	position: absolute;
	top: 47px;
	right: -9px;
	width: 122px;
	height: 118px;
	border: 5px solid #ed1c24;
	border-radius: 50%;
	pointer-events: none;
}
.scrollbar {
	display: flex;
	flex-direction: column;
	align-items: center;
	flex: none;
	width: 21px;
	padding: 8px 0 10px;
	background: #f1f1f1;
}
.scrollbar i {
	border: 5px solid transparent;
}
.scrollbar .up {
	border-top: 0;
	border-bottom-color: #a3a3a3;
}
.scrollbar .down {
	border-bottom: 0;
	border-top-color: #505050;
}
.thumb {
	width: 17px;
	height: 52px;
	margin: 7px 0 auto;
	background: #c1c1c1;
}

/* download shelf */
.downloads {
	display: flex;
	align-items: center;
	flex: none;
	height: 71px;
	padding-right: 17px;
	border-top: 1px solid #dadce0;
	font-size: 15px;
}
.item {
	display: flex;
	align-items: center;
	width: 296px;
	height: 55px;
	margin-right: auto;
	padding: 0 22px 0 27px;
	border-right: 1px solid #ccc;
}
.item .doc {
	width: 16px;
	height: 20px;
	margin-right: 18px;
}
.item button {
	margin-left: auto;
}
.item button svg, .close svg {
	width: 12px;
	height: 12px;
}
.show-all {
	width: 98px;
	height: 40px;
	margin-right: 15px;
	border: 1px solid #dadce0;
	border-radius: 5px;
	color: #1a73e8;
	font-size: 14px;
	font-weight: 600;
}

/* windows taskbar */
.taskbar {
	display: flex;
	align-items: center;
	flex: none;
	height: 60px;
	padding-right: 23px;
	background: linear-gradient(90deg, #122936 35%, rgba(18, 41, 54, 0) 60%), linear-gradient(#262b2e, #1d2b34);
	color: #fff;
	font-size: 15px;
	line-height: 20px;
}
.weather {
	display: flex;
	gap: 5px;
	width: 321px;
	padding-left: 26px;
}
.weather svg {
	width: 34px;
	height: 34px;
}
.weather em {
	font-style: normal;
	color: #ccd2d5;
}
.start svg {
	width: 30px;
	height: 30px;
}
.search {
	display: flex;
	align-items: center;
	width: 273px;
	height: 40px;
	margin-left: 17px;
	padding: 0 4px 0 13px;
	border-radius: 20px;
	background: #2e424e;
}
.search input {
	flex: 1;
	min-width: 0;
	padding: 0 0 0 12px;
	border: 0;
	background: none;
	font: inherit;
	font-size: 16px;
}
.search input::placeholder {
	color: #d3d8db;
}
.search .city {
	width: 66px;
	height: 34px;
}
.apps {
	display: flex;
	margin-left: 3px;
}
.apps a {
	position: relative;
	display: grid;
	place-items: center;
	width: 55px;
	height: 60px;
}
.apps svg {
	width: 30px;
	height: 30px;
}
.apps .open::after {
	content: "";
	position: absolute;
	bottom: 6px;
	left: 24px;
	width: 8px;
	height: 4px;
	border-radius: 2px;
	background: #9a9fa2;
}
.apps .current {
	height: 50px;
	margin: 5px 3px;
	width: 49px;
	border-radius: 5px;
	background: #363c40;
}
.apps .current svg {
	width: 38px;
	height: 36px;
	margin: 0 0 6px 6px;
}
.apps .current::after {
	bottom: 1px;
	left: 15px;
	width: 20px;
	background: #566773;
}
.tray {
	display: flex;
	align-items: center;
	gap: 10px;
	margin-left: auto;
}
.tray svg {
	fill: none;
	stroke: #fff;
	stroke-width: 1.4;
}
.tray .lang {
	width: 44px;
}
.status {
	display: flex;
	gap: 10px;
	margin-left: 5px;
}
.clock {
	width: 88px;
	text-align: right;
	white-space: nowrap;
}
```
